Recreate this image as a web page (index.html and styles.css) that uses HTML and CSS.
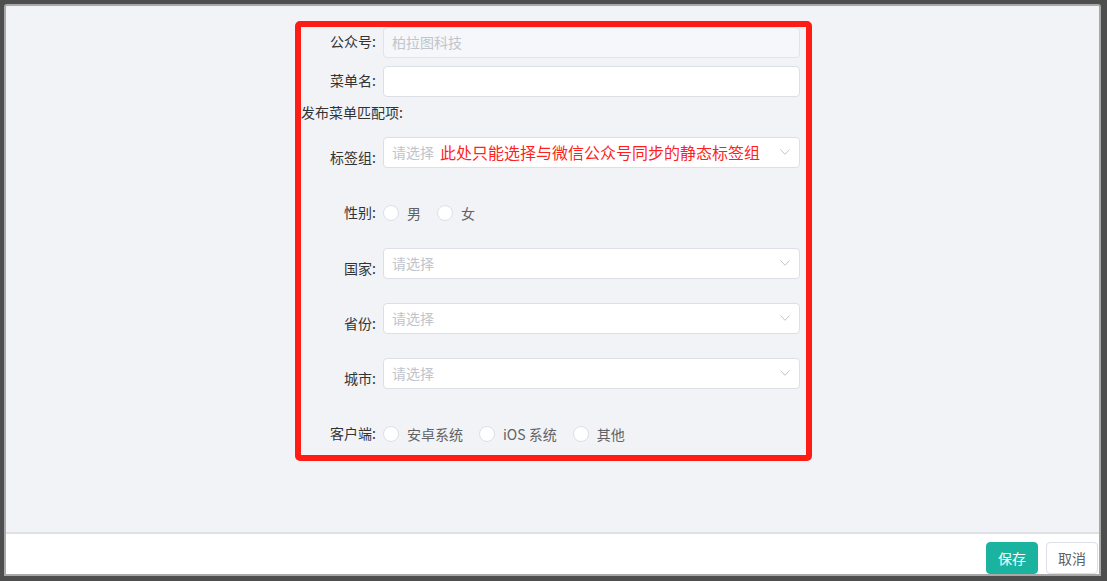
FILE: index.html
```html
<!DOCTYPE html>
<html lang="zh-CN">
<head>
<meta charset="utf-8">
<title>菜单</title>
<link rel="stylesheet" href="styles.css">
</head>
<body>
<div class="window">
  <div class="window-inner">
    <main class="main">
      <form class="form-frame">
        <div class="row">
          <label class="label">公众号:</label>
          <div class="input is-disabled">柏拉图科技</div>
        </div>
        <div class="row row-gap-8">
          <label class="label">菜单名:</label>
          <div class="input"></div>
        </div>
        <div class="section-title">发布菜单匹配项:</div>
        <div class="row row-tall row-gap-15">
          <label class="label">标签组:</label>
          <div class="input select">
            <span class="select-text"><span class="placeholder">请选择</span><span class="note">此处只能选择与微信公众号同步的静态标签组</span></span>
            <svg class="chevron" width="10" height="6" viewBox="0 0 10 6"><path d="M0.5 0.5 L5 5.3 L9.5 0.5" fill="none" stroke="#c0c4cc" stroke-width="1"/></svg>
          </div>
        </div>
        <div class="row row-radio row-gap-20">
          <label class="label">性别:</label>
          <div class="radio-group">
            <span class="radio"><span class="radio-dot"></span><span class="radio-text">男</span></span>
            <span class="radio"><span class="radio-dot"></span><span class="radio-text">女</span></span>
          </div>
        </div>
        <div class="row row-tall row-gap-19">
          <label class="label">国家:</label>
          <div class="input select">
            <span class="placeholder">请选择</span>
            <svg class="chevron" width="10" height="6" viewBox="0 0 10 6"><path d="M0.5 0.5 L5 5.3 L9.5 0.5" fill="none" stroke="#c0c4cc" stroke-width="1"/></svg>
          </div>
        </div>
        <div class="row row-tall row-gap-15">
          <label class="label">省份:</label>
          <div class="input select">
            <span class="placeholder">请选择</span>
            <svg class="chevron" width="10" height="6" viewBox="0 0 10 6"><path d="M0.5 0.5 L5 5.3 L9.5 0.5" fill="none" stroke="#c0c4cc" stroke-width="1"/></svg>
          </div>
        </div>
        <div class="row row-tall row-gap-15">
          <label class="label">城市:</label>
          <div class="input select">
            <span class="placeholder">请选择</span>
            <svg class="chevron" width="10" height="6" viewBox="0 0 10 6"><path d="M0.5 0.5 L5 5.3 L9.5 0.5" fill="none" stroke="#c0c4cc" stroke-width="1"/></svg>
          </div>
        </div>
        <div class="row row-radio row-gap-20">
          <label class="label">客户端:</label>
          <div class="radio-group">
            <span class="radio"><span class="radio-dot"></span><span class="radio-text">安卓系统</span></span>
            <span class="radio"><span class="radio-dot"></span><span class="radio-text">iOS 系统</span></span>
            <span class="radio"><span class="radio-dot"></span><span class="radio-text">其他</span></span>
          </div>
        </div>
      </form>
    </main>
    <footer class="footer">
      <button class="btn btn-primary" type="button">保存</button>
      <button class="btn" type="button">取消</button>
    </footer>
  </div>
</div>
</body>
</html>
```
FILE: styles.css
```css
html, body {
  margin: 0;
  padding: 0;
}
body {
  width: 1107px;
  height: 581px;
  overflow: hidden;
  font-family: "Microsoft YaHei", "Noto Sans CJK SC", "Noto Sans", sans-serif;
  font-size: 14px;
  color: #333;
}
.window {
  box-sizing: border-box;
  width: 1107px;
  height: 581px;
  background: #4e4e4e;
  border-style: solid;
  border-color: #4e4e4e;
  border-width: 4px 6px 5px 4px;
}
.window-inner {
  box-sizing: border-box;
  height: 100%;
  border: 2px solid #a9a9a9;
  border-radius: 3px 3px 0 0;
  background: #f2f3f7;
  display: flex;
  flex-direction: column;
}
.main {
  flex: 1;
  padding: 15px 0 0 289px;
}
.form-frame {
  box-sizing: content-box;
  width: 499px;
  height: 428px;
  padding: 0 6px 0 0;
  margin: 0;
  border: 6px solid #ff1c14;
  border-radius: 5px;
  display: flex;
  flex-direction: column;
}
.row {
  display: flex;
  align-items: flex-start;
}
.row-gap-8 { margin-top: 8px; }
.row-gap-15 { margin-top: 15px; }
.row-gap-19 { margin-top: 19px; }
.row-gap-20 { margin-top: 20px; }
.label {
  flex: 0 0 82px;
  box-sizing: border-box;
  padding-right: 7px;
  padding-bottom: 2px;
  text-align: right;
  line-height: 29px;
  color: #333;
  white-space: nowrap;
}
.row-tall .label {
  padding-bottom: 0;
  line-height: 40px;
}
.row-radio .label {
  padding-bottom: 1px;
  line-height: 31px;
}
.section-title {
  margin-top: 5px;
  margin-left: 0;
  line-height: 20px;
  color: #333;
  white-space: nowrap;
}
.input {
  flex: 1;
  box-sizing: border-box;
  height: 31px;
  line-height: 28px;
  padding: 0 8px;
  background: #fff;
  border: 1px solid #dcdfe6;
  border-radius: 4px;
  color: #606266;
}
.input.is-disabled {
  background: #f5f7fa;
  border-color: #e0e3e9;
  color: #c0c4cc;
}
.select {
  display: flex;
  align-items: center;
  justify-content: space-between;
  padding-right: 9px;
  padding-bottom: 1px;
}
.select-text {
  display: flex;
  align-items: center;
}
.placeholder {
  color: #c0c4cc;
}
.note {
  margin-left: 6px;
  font-size: 16px;
  color: #ff1f1f;
}
.chevron {
  display: block;
  flex-shrink: 0;
}
.radio-group {
  display: flex;
  align-items: center;
  height: 32px;
}
.radio {
  display: flex;
  align-items: center;
  margin-right: 16px;
  color: #606266;
}
.radio-dot {
  box-sizing: border-box;
  width: 16px;
  height: 16px;
  border: 1px solid #dcdfe6;
  border-radius: 50%;
  background: #fff;
  margin-right: 8px;
}
.radio-text {
  line-height: 20px;
}
.footer {
  flex: 0 0 40px;
  box-sizing: border-box;
  background: #fff;
  border-top: 2px solid #dfe0e5;
  display: flex;
  justify-content: flex-end;
  align-items: flex-start;
  gap: 8px;
  padding: 8px 1px 0 0;
}
.btn {
  box-sizing: border-box;
  width: 52px;
  height: 32px;
  padding: 0;
  border: 1px solid #dcdfe6;
  border-radius: 4px;
  background: #fff;
  color: #606266;
  font-family: inherit;
  font-size: 14px;
  line-height: 30px;
}
.btn-primary {
  background: #1ab3a0;
  border-color: #1ab3a0;
  color: #fff;
}
```
